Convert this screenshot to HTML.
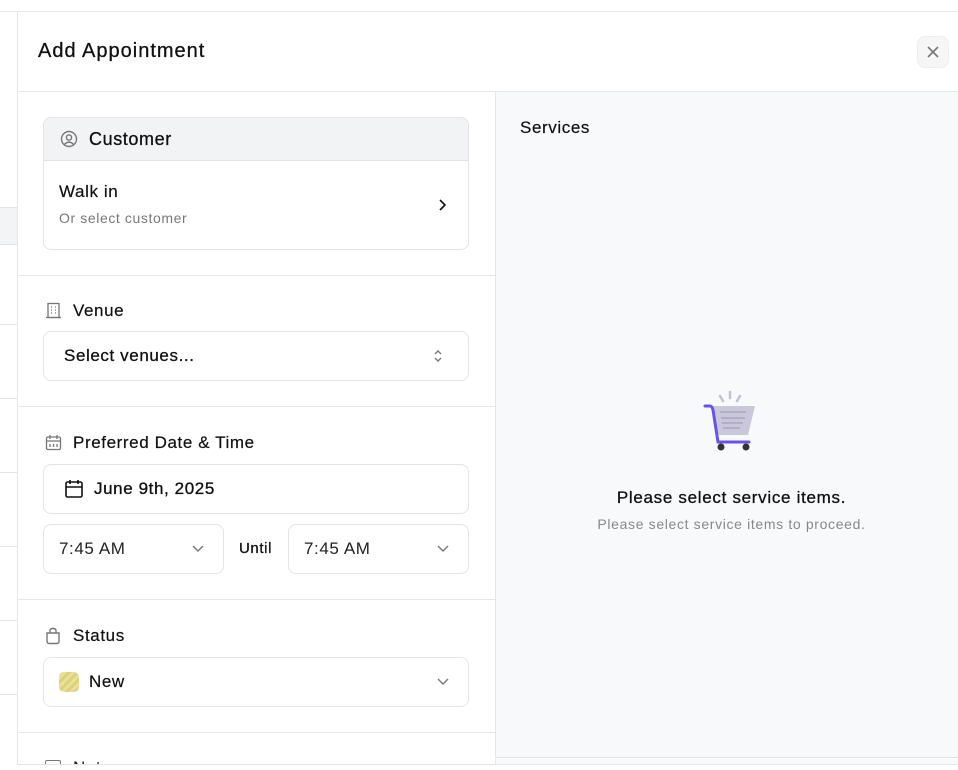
<!DOCTYPE html>
<html><head><meta charset="utf-8"><style>
*{box-sizing:border-box;margin:0;padding:0}
body{width:958px;height:770px;overflow:hidden;background:#fff;font-family:"Liberation Sans",sans-serif;color:#111;position:relative;letter-spacing:0.6px}
.a{position:absolute}
.box{position:absolute;border:1px solid #e3e4e8;border-radius:8px;background:#fff}
.lbl{position:absolute;font-size:17px;color:#111}
.hl{position:absolute;left:0;width:17px;height:1px;background:#e3e4e8}
</style></head><body>
<div class="a" style="left:0;top:11px;width:958px;height:1px;background:#e5e6ea"></div>
<div class="a" style="left:0;top:207px;width:17px;height:37px;background:#f3f4f6"></div>
<div class="hl" style="top:207px"></div><div class="hl" style="top:244px"></div>
<div class="hl" style="top:324px"></div><div class="hl" style="top:398px"></div>
<div class="hl" style="top:472px"></div><div class="hl" style="top:546px"></div>
<div class="hl" style="top:620px"></div><div class="hl" style="top:694px"></div>
<div class="a" style="left:17px;top:12px;width:1px;height:753px;background:#e5e6ea"></div>
<div class="a" style="left:17px;top:764px;width:941px;height:1px;background:#e3e4e8"></div>

<div class="a" style="left:38px;top:40px;font-size:20px;letter-spacing:1px;-webkit-text-stroke:0.3px #111">Add Appointment</div>
<div class="a" style="left:917px;top:36px;width:32px;height:32px;border-radius:8px;background:#f6f6f7;border:1px solid #eee"></div>
<svg class="a" style="left:926px;top:45px" width="14" height="14" viewBox="0 0 14 14"><path d="M2 2L12 12M12 2L2 12" stroke="#777" stroke-width="1.6"/></svg>
<div class="a" style="left:18px;top:91px;width:940px;height:1px;background:#e5e6ea"></div>

<div class="a" style="left:495px;top:92px;width:463px;height:666px;background:#f8f9fb;border-left:1px solid #e5e6ea;border-bottom:1px solid #e3e4e8"></div>
<div class="a" style="left:495px;top:759px;width:463px;height:5px;background:#f8f9fb;border-left:1px solid #e5e6ea"></div>
<div class="a" style="left:520px;top:118px;font-size:17px;-webkit-text-stroke:0.2px #111">Services</div>
<svg class="a" style="left:700px;top:390px" width="60" height="62" viewBox="0 0 60 62">
<path d="M30 8V2M23 11L20 6M37 11L40 6" stroke="#c3c1d4" stroke-width="2.5" stroke-linecap="round"/>
<path d="M13 16H55L48 45H18Z" fill="#c9c7d9"/>
<path d="M20 22H46M21 28H45M22 33H43M23 38H40" stroke="#a9a6bf" stroke-width="1.5"/>
<path d="M5 16H10Q12 16 13 20L18 52H49" stroke="#6a50ef" stroke-width="3" fill="none" stroke-linecap="round"/>
<circle cx="21" cy="57" r="3.5" fill="#333"/><circle cx="46" cy="57" r="3.5" fill="#333"/>
</svg>
<div class="a" style="left:495px;width:473px;top:488px;text-align:center;font-size:17px;letter-spacing:0.7px;-webkit-text-stroke:0.3px #111">Please select service items.</div>
<div class="a" style="left:495px;width:473px;top:516px;text-align:center;font-size:14px;color:#888;letter-spacing:0.65px">Please select service items to proceed.</div>

<!-- customer -->
<div class="box" style="left:43px;top:117px;width:426px;height:133px;overflow:hidden">
<div style="height:43px;background:#f2f3f5;border-bottom:1px solid #e3e4e8"></div></div>
<svg class="a" style="left:60px;top:130px" width="18" height="18" viewBox="0 0 18 18" fill="none" stroke="#777" stroke-width="1.4"><circle cx="9" cy="9" r="7.5"/><circle cx="9" cy="7.5" r="2.6"/><path d="M4.5 14.3Q9 10 13.5 14.3"/></svg>
<div class="lbl" style="left:89px;top:129px;font-size:18px;-webkit-text-stroke:0.3px #111">Customer</div>
<div class="lbl" style="left:59px;top:182px;-webkit-text-stroke:0.2px #111">Walk in</div>
<div class="a" style="left:59px;top:210px;font-size:14px;color:#777">Or select customer</div>
<svg class="a" style="left:437px;top:198px" width="10" height="14" viewBox="0 0 10 14"><path d="M3 2L8 7L3 12" stroke="#111" stroke-width="1.6" fill="none"/></svg>
<div class="a" style="left:18px;top:275px;width:477px;height:1px;background:#e5e6ea"></div>

<!-- venue -->
<svg class="a" style="left:45px;top:302px" width="17" height="17" viewBox="0 0 17 17" fill="none" stroke="#777" stroke-width="1.3"><rect x="3" y="1.5" width="11" height="14"/><path d="M1 15.5H16M6 5h1M10 5h1M6 8h1M10 8h1M6 11h1M10 11h1"/></svg>
<div class="lbl" style="left:73px;top:301px;-webkit-text-stroke:0.2px #111">Venue</div>
<div class="box" style="left:43px;top:331px;width:426px;height:50px"></div>
<div class="lbl" style="left:64px;top:346px;-webkit-text-stroke:0.3px #111">Select venues...</div>
<svg class="a" style="left:432px;top:348px" width="12" height="16" viewBox="0 0 12 16"><path d="M3 6L6 3L9 6M3 10L6 13L9 10" stroke="#777" stroke-width="1.4" fill="none"/></svg>
<div class="a" style="left:18px;top:406px;width:477px;height:1px;background:#e5e6ea"></div>

<!-- date -->
<svg class="a" style="left:45px;top:434px" width="17" height="17" viewBox="0 0 17 17" fill="none" stroke="#777" stroke-width="1.3"><rect x="1.5" y="3" width="14" height="12.5" rx="1.5"/><path d="M5 1v4M12 1v4M1.5 7H15.5M5 10v3M8.5 10v3M12 10v3"/></svg>
<div class="lbl" style="left:73px;top:433px;-webkit-text-stroke:0.2px #111">Preferred Date &amp; Time</div>
<div class="box" style="left:43px;top:464px;width:426px;height:50px"></div>
<svg class="a" style="left:65px;top:479px" width="18" height="19" viewBox="0 0 18 19" fill="none" stroke="#111" stroke-width="1.6"><rect x="1" y="3" width="16" height="15" rx="1.5"/><path d="M5 1v4M13 1v4M1 8H17"/></svg>
<div class="lbl" style="left:94px;top:479px;-webkit-text-stroke:0.35px #111">June 9th, 2025</div>
<div class="box" style="left:43px;top:524px;width:181px;height:50px"></div>
<div class="lbl" style="left:59px;top:539px;color:#222">7:45 AM</div>
<svg class="a" style="left:191px;top:544px" width="14" height="10" viewBox="0 0 14 10"><path d="M2 2L7 7L12 2" stroke="#777" stroke-width="1.4" fill="none"/></svg>
<div class="a" style="left:239px;top:540px;font-size:15px;-webkit-text-stroke:0.3px #111">Until</div>
<div class="box" style="left:288px;top:524px;width:181px;height:50px"></div>
<div class="lbl" style="left:304px;top:539px;color:#222">7:45 AM</div>
<svg class="a" style="left:436px;top:544px" width="14" height="10" viewBox="0 0 14 10"><path d="M2 2L7 7L12 2" stroke="#777" stroke-width="1.4" fill="none"/></svg>
<div class="a" style="left:18px;top:599px;width:477px;height:1px;background:#e5e6ea"></div>

<!-- status -->
<svg class="a" style="left:45px;top:627px" width="16" height="18" viewBox="0 0 16 18" fill="none" stroke="#777" stroke-width="1.4"><path d="M2 6H14V14Q14 16.5 11.5 16.5H4.5Q2 16.5 2 14Z"/><path d="M5 6V3.5Q5 1.5 8 1.5Q11 1.5 11 3.5V6"/></svg>
<div class="lbl" style="left:73px;top:626px;-webkit-text-stroke:0.2px #111">Status</div>
<div class="box" style="left:43px;top:657px;width:426px;height:50px"></div>
<div class="a" style="left:59px;top:672px;width:20px;height:20px;border-radius:5px;background:repeating-linear-gradient(135deg,#ddd27a 0 3px,#e9e19a 3px 6px)"></div>
<div class="lbl" style="left:89px;top:672px;-webkit-text-stroke:0.2px #111">New</div>
<svg class="a" style="left:436px;top:677px" width="14" height="10" viewBox="0 0 14 10"><path d="M2 2L7 7L12 2" stroke="#777" stroke-width="1.4" fill="none"/></svg>
<div class="a" style="left:18px;top:732px;width:477px;height:1px;background:#e5e6ea"></div>
<div class="a" style="left:45px;top:760px;width:16px;height:4px;border:1.4px solid #777;border-bottom:none;border-radius:2px 2px 0 0"></div>
<div class="a" style="left:73px;top:758px;height:6px;overflow:hidden"><div style="font-size:17px;line-height:20px">Notes</div></div>
</body></html>
